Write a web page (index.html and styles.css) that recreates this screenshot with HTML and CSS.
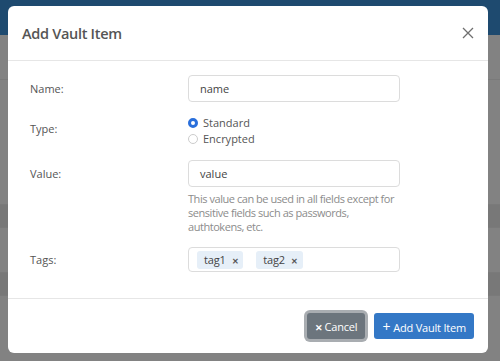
FILE: index.html
```html
<!DOCTYPE html>
<html>
<head>
    <title>Add Vault Item</title>
    <link rel="stylesheet" href="styles.css">
</head>
<body>
    <!-- page behind the dialog -->
    <div class="page">
        <div class="topbar"></div>
        <div class="row"></div>
        <div class="row tall"></div>
        <div class="row band"></div>
        <div class="row"></div>
        <div class="row band"></div>
    </div>

    <div class="overlay">
        <div class="modal">
            <div class="modal-header">
                <h3>Add Vault Item</h3>
                <span class="close">
                    <svg width="12" height="12" viewBox="0 0 12 12"><path d="M1 1L11 11M11 1L1 11" stroke="#6f6f6f" stroke-width="1.3" fill="none"/></svg>
                </span>
            </div>

            <div class="modal-body">
                <div class="field">
                    <label>Name:</label>
                    <div class="control">
                        <div class="input">name</div>
                    </div>
                </div>

                <div class="field">
                    <label>Type:</label>
                    <div class="control radios">
                        <div class="radio"><span class="dot checked"></span>Standard</div>
                        <div class="radio"><span class="dot"></span>Encrypted</div>
                    </div>
                </div>

                <div class="field">
                    <label>Value:</label>
                    <div class="control">
                        <div class="input">value</div>
                        <p class="help">This value can be used in all fields except for sensitive fields such as passwords, authtokens, etc.</p>
                    </div>
                </div>

                <div class="field">
                    <label class="short">Tags:</label>
                    <div class="control">
                        <div class="input tags">
                            <span class="tag">tag1<b>&#x2715;</b></span>
                            <span class="tag">tag2<b>&#x2715;</b></span>
                        </div>
                    </div>
                </div>
            </div>

            <div class="modal-footer">
                <button class="btn btn-cancel"><b>&#x2715;</b>Cancel</button>
                <button class="btn btn-add"><b>+</b>Add Vault Item</button>
            </div>
        </div>
    </div>
</body>
</html>
```

FILE: styles.css
```css
/* base */
body {
    margin: 0;
    font-family: "Open Sans", "Noto Sans", sans-serif;
    background-color: #828282;
    color: #555;
}

/* dimmed page behind */
.page { height: 361px; overflow: hidden; }
.topbar { height: 35px; background-color: #1e4a6f; }
.row { height: 44px; border-bottom: 1px solid #7a7a7a; }
.row.tall { height: 124px; }
.row.band { background-color: #787878; height: 22px; }

/* modal */
.overlay {
    position: absolute;
    top: 0;
    left: 0;
    width: 500px;
    height: 361px;
    padding: 6px 0 0 8px;
    box-sizing: border-box;
}
.modal {
    width: 480px;
    height: 347px;
    background: #fff;
    border-radius: 6px;
    display: flex;
    flex-direction: column;
}

.modal-header {
    height: 55px;
    box-sizing: border-box;
    padding: 0 14px;
    display: flex;
    align-items: center;
    justify-content: space-between;
    border-bottom: 1px solid #e6e6e6;
}
.modal-header h3 {
    margin: 0;
    font-size: 14.5px;
    font-weight: 600;
    letter-spacing: -0.3px;
    color: #555;
}
.close { display: flex; }

.modal-body {
    flex: 1;
    padding: 14px 22px;
    display: flex;
    flex-direction: column;
    gap: 13px;
}

.field { display: flex; font-size: 11px; }
.field label {
    width: 158px;
    line-height: 27px;
    color: #555;
}
.field label.short { line-height: 25px; }
.control { width: 212px; }

.input {
    height: 27px;
    box-sizing: border-box;
    border: 1px solid #dcdcdc;
    border-radius: 4px;
    padding: 0 11px;
    line-height: 25px;
    color: #444;
}

/* radio buttons */
.radio {
    display: flex;
    align-items: center;
    line-height: 16px;
    color: #555;
}
.dot {
    width: 8px;
    height: 8px;
    border: 1px solid #ccc;
    border-radius: 50%;
    margin-right: 5px;
}
.dot.checked {
    width: 4px;
    height: 4px;
    border: 3px solid #2a6fdb;
}

.help {
    margin: 5px 0 0;
    font-size: 11px;
    line-height: 14px;
    letter-spacing: -0.45px;
    color: #8c8c8c;
}

/* tags */
.tags {
    height: 25px;
    display: flex;
    align-items: center;
    gap: 13px;
    padding: 0 8px;
}
.tag {
    background-color: #e6eff8;
    border-radius: 3px;
    padding: 0 5px 0 7px;
    line-height: 17px;
    color: #444;
    font-size: 11px;
    letter-spacing: -0.2px;
}
.tag b { font-weight: bold; font-size: 8px; margin-left: 6px; color: #555; }

/* footer */
.modal-footer {
    height: 55px;
    box-sizing: border-box;
    border-top: 1px solid #e6e6e6;
    padding: 0 14px;
    display: flex;
    align-items: center;
    justify-content: flex-end;
    gap: 9px;
}
.btn {
    height: 26px;
    border: none;
    border-radius: 3px;
    color: #fff;
    font-family: "Open Sans", "Noto Sans", sans-serif;
    font-size: 11px;
    letter-spacing: -0.2px;
    padding: 0 8px;
    cursor: pointer;
}
.btn b { font-weight: normal; margin-right: 3px; }
.btn-cancel {
    background-color: #6c757d;
    padding: 0 8px;
    box-shadow: 0 0 0 3px #a9adb1;
}
.btn-cancel b { font-size: 9px; font-weight: bold; margin-right: 2px; }
.btn-add { background-color: #3478c6; }
.btn-add b { font-size: 14px; }
```
